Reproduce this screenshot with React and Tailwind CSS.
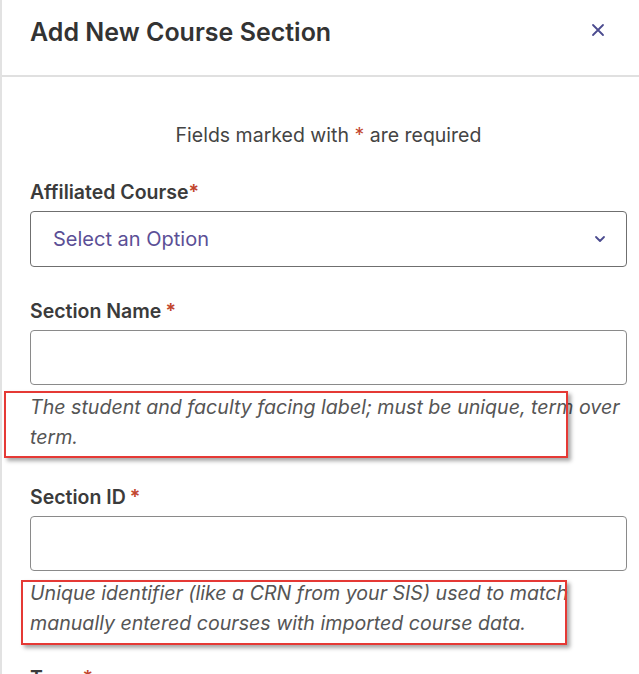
import React from "react";

const Req = ({ tight }) => (
  <span className={`text-[#c2452d] ${tight ? "" : "ml-1"}`}>*</span>
);

const Label = ({ children, tight }) => (
  <p className="text-[19.5px] leading-[24px] font-semibold text-[#3b3b3b]">
    {children}
    <Req tight={tight} />
  </p>
);

const TextInput = () => (
  <div className="h-[55px] w-full rounded border border-[#8a8a8a] bg-white" />
);

const Hint = ({ children, box }) => (
  <div className="relative mt-[7px]">
    <p className="text-[19.6px] leading-[30px] italic text-[#555] whitespace-nowrap">{children}</p>
    {/* review annotation */}
    <div className={`absolute border-2 border-[#e53935] shadow-[3px_3px_4px_rgba(0,0,0,0.35)] ${box}`} />
  </div>
);

export default function App() {
  return (
    <div className="h-[674px] w-[639px] overflow-hidden bg-white border-l-2 border-[#e2e2e2] font-['Inter','Liberation_Sans',sans-serif]">
      {/* Header */}
      <div className="h-[77px] flex items-start justify-between pl-[28px] pr-[34px] pt-[17px] border-b-2 border-[#e0e0e0]">
        <h2 className="text-[25px] leading-[30px] font-semibold text-[#333]">Add New Course Section</h2>
        <button className="mt-[6px] text-[#4b4b8f]">
          <svg width="14" height="14" viewBox="0 0 14 14" fill="none" stroke="currentColor" strokeWidth="1.8" strokeLinecap="round">
            <path d="M2 2L12 12M12 2L2 12" />
          </svg>
        </button>
      </div>

      {/* Body */}
      <div className="pl-[28px] pr-[12px] pt-[46px]">
        <p className="text-center text-[19.5px] leading-[24px] text-[#444]">
          Fields marked with <span className="text-[#c2452d]">*</span> are required
        </p>

        <div className="mt-[33px]">
          <Label tight>Affiliated Course</Label>
          <div className="mt-[7px] h-[56px] w-full rounded border border-[#6f6f6f] flex items-center justify-between pl-[22px] pr-[20px]">
            <span className="text-[20px] text-[#5b4f96]">Select an Option</span>
            <svg width="12" height="8" viewBox="0 0 12 8" fill="none" stroke="#4b4b8f" strokeWidth="1.8" strokeLinecap="round" strokeLinejoin="round">
              <path d="M2 2L6 6L10 2" />
            </svg>
          </div>
        </div>

        <div className="mt-[32px]">
          <Label>Section Name</Label>
          <div className="mt-[7px]">
            <TextInput />
          </div>
          <Hint box="-left-[26px] -top-[1px] w-[564px] h-[67px]">
            The student and faculty facing label; must be unique, term over
            <br />
            term.
          </Hint>
        </div>

        <div className="mt-[33px]">
          <Label>Section ID</Label>
          <div className="mt-[7px]">
            <TextInput />
          </div>
          <Hint box="-left-[9px] top-[2px] w-[546px] h-[65px]">
            Unique identifier (like a CRN from your SIS) used to match
            <br />
            manually entered courses with imported course data.
          </Hint>
        </div>

        <div className="mt-[28px]">
          <Label>Term</Label>
        </div>
      </div>
    </div>
  );
}
